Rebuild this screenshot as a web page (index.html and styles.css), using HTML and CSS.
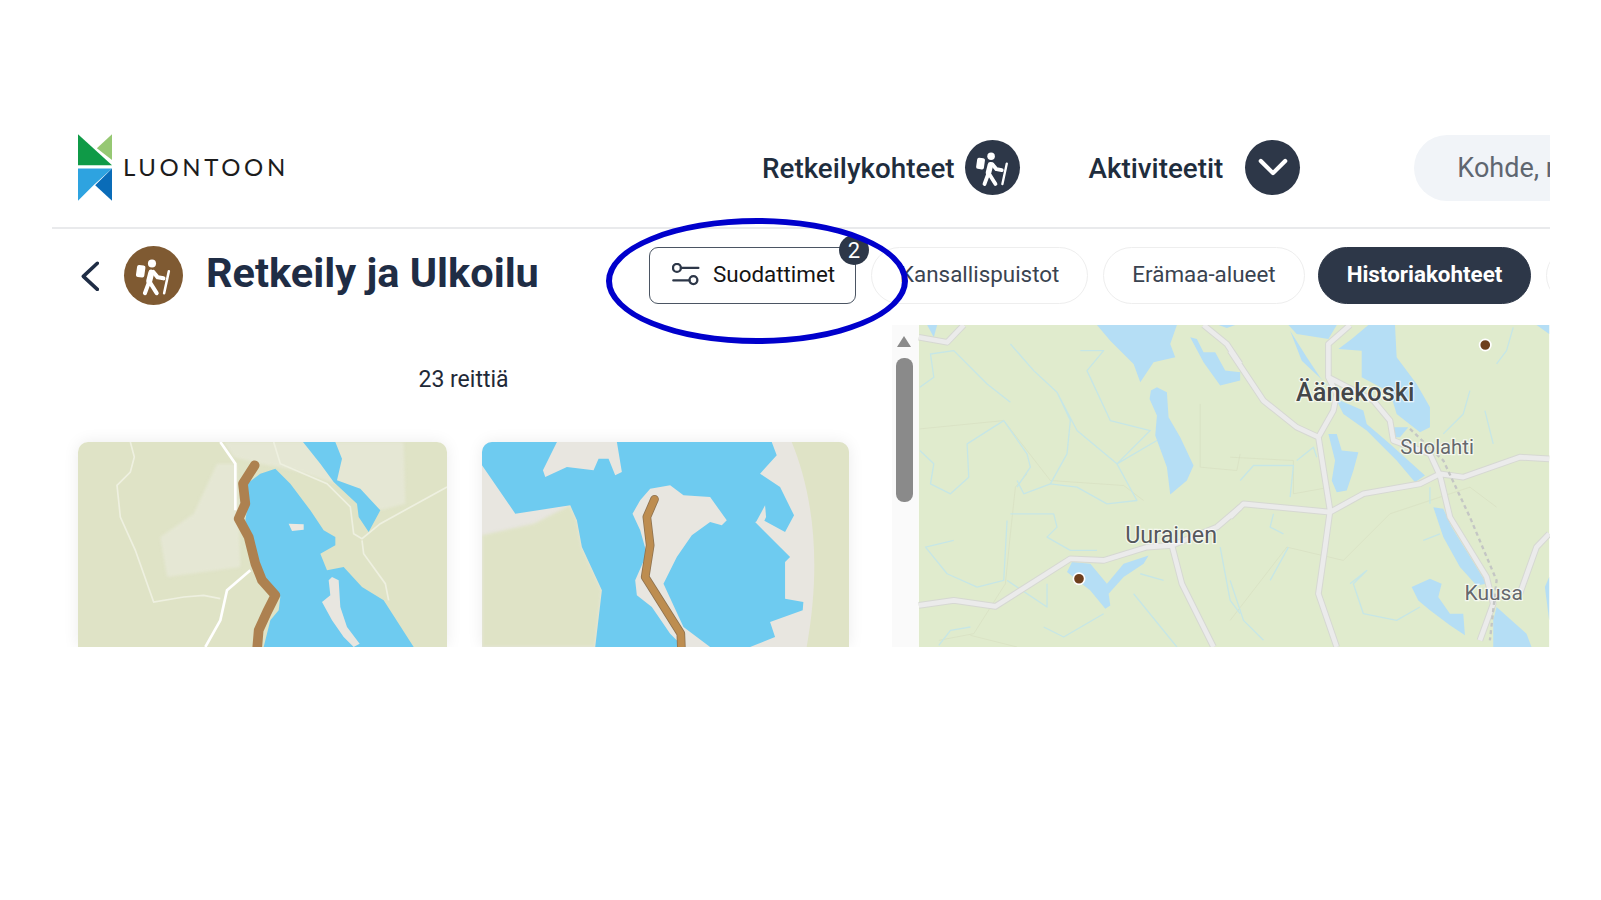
FILE: index.html
```html
<!DOCTYPE html>
<html lang="fi">
<head>
<meta charset="utf-8">
<title>Luontoon</title>
<link rel="stylesheet" href="styles.css">
</head>
<body>
<svg class="defs" width="0" height="0" aria-hidden="true">
  <symbol id="hiker" viewBox="15 15 175 175">
    <circle cx="98" cy="67" r="12" fill="#fff"/>
    <rect x="52" y="72" width="25" height="36" rx="6" fill="#fff" transform="rotate(8 65 90)"/>
    <path d="M96 94 90 118" fill="none" stroke="#fff" stroke-width="18" stroke-linecap="round"/>
    <path d="M90 120 77 155M90 120 112 155M102 92 115 108 132 111" fill="none" stroke="#fff" stroke-width="12" stroke-linecap="round" stroke-linejoin="round"/>
    <path d="M148 90 134 155" fill="none" stroke="#fff" stroke-width="7.5" stroke-linecap="round"/>
  </symbol>
</svg>
<div class="frame">
  <header class="top">
    <div class="brand">
      <svg class="logo" viewBox="24 28 101 198">
        <path d="M24 28 125 120H24Z" fill="#0f9a47"/>
        <path d="M125 28V105L80 70Z" fill="#96c873"/>
        <path d="M24 130H125L70 180 24 226Z" fill="#2ea3e0"/>
        <path d="M125 130V226L75 180Z" fill="#0a6cb8"/>
      </svg>
      <span class="wordmark">LUONTOON</span>
    </div>
    <nav class="nav">
      <span class="nav-label">Retkeilykohteet</span>
      <svg class="nav-icon"><use href="#hiker"/></svg>
      <span class="nav-label nav-second">Aktiviteetit</span>
      <span class="nav-circle">
        <svg class="chev-down" viewBox="0 0 32 20"><path d="M3 3 16 16 29 3"/></svg>
      </span>
    </nav>
    <div class="search">Kohde, reitti</div>
  </header>

  <section class="toolbar">
    <svg class="back" viewBox="90 450 55 92"><path d="M140 457 97 497 140 537"/></svg>
    <svg class="title-icon"><use href="#hiker"/></svg>
    <h1 class="title">Retkeily ja Ulkoilu</h1>
    <button class="filter">
      <svg class="filter-icon" viewBox="33 28 85 68">
        <circle cx="48" cy="42" r="12"/><path d="M60 42H113M37 80H86"/><circle cx="98" cy="79" r="12"/>
      </svg>
      Suodattimet
      <span class="badge">2</span>
    </button>
    <span class="chip">Kansallispuistot</span>
    <span class="chip">Erämaa-alueet</span>
    <span class="chip chip-active">Historiakohteet</span>
    <span class="chip chip-edge"></span>
  </section>

  <main class="main">
    <section class="list">
      <p class="count">23 reittiä</p>
      <div class="cards">
        <article class="card">
          <svg class="card-map" viewBox="53 65 1107 615" preserveAspectRatio="none">
            <rect x="53" y="65" width="1107" height="615" fill="#dfe3c6"/>
            <path class="patch" d="M490 65H1030L1035 250 960 270 860 200 700 150 600 130 520 110ZM300 350 400 280 470 130 530 130 540 440 320 470Z" fill="#e5e7d4"/>
            <path d="M210 65 222 110 210 155 170 195 180 290 225 390 280 545 370 530 430 525 480 535M640 65 660 130 800 190 870 260 880 340 905 355 960 310 1160 200M905 360 910 400 975 490 985 540" fill="none" stroke="#eef0e0" stroke-width="5"/>
            <path d="M480 65 525 130 525 270M570 450 500 510 480 600 435 680" fill="none" stroke="#fff" stroke-width="8"/>
            <path d="M728 65H825L845 115 830 180 900 205 960 270 925 335 895 290 890 250 820 185 780 130Z" fill="#6ecbf0"/>
            <path d="M560 190 600 160 645 145 690 190 750 270 790 330 825 350 825 375 780 400 800 450 850 440 905 500 970 540 1060 680H610L630 600 655 570 660 530 620 480 590 420 560 330 555 300 565 240Z" fill="#6ecbf0"/>
            <path d="M815 470 835 480 840 560 860 620 898 670 880 680 850 650 815 600 785 545 810 525 805 480Z" fill="#e8e6e0"/>
            <path d="M685 310 730 312 730 328 695 332Z" fill="#ece8e0"/>
            <path d="M583 135 548 190 555 250 535 295 565 350 585 430 605 480 645 525 620 575 595 630 590 690" fill="none" stroke="#ad8150" stroke-width="29" stroke-linecap="round" stroke-linejoin="round"/>
          </svg>
        </article>
        <article class="card">
          <svg class="card-map" viewBox="35 65 1102 615" preserveAspectRatio="none">
            <rect x="35" y="65" width="1102" height="615" fill="#e8e6e0"/>
            <path d="M965 65C1020 200 1060 400 1010 680H1137V65Z" fill="#dfe3c6"/>
            <path class="patch" d="M35 345 190 310 300 255 320 300 335 380 395 510 375 680H35Z" fill="#dfe3c6"/>
            <path d="M35 65H905L920 105 870 160 930 200 972 285 945 335 880 300 855 305 960 410 945 425 945 535 1000 545 998 570 900 605 915 650 840 680H375L395 510 335 380 320 300 300 255 135 280 35 135Z" fill="#6ecbf0"/>
            <path d="M260 65H440L455 155 435 165 415 115 385 115 370 150 290 140 225 170 218 150Z" fill="#e8e6e0"/>
            <path d="M885 255 888 290 875 318 858 305Z" fill="#e8e6e0"/>
            <path d="M540 205 600 195 640 225 720 230 770 300 755 315 720 305 665 345 620 410 580 490 640 620 720 680H640L600 640 545 560 500 525 495 480 530 400 510 330 487 280 510 240Z" fill="#e8e6e0"/>
            <path d="M553 237 530 290 540 375 525 470 632 640 634 690" fill="none" stroke="#8f7350" stroke-width="26" stroke-linecap="round" stroke-linejoin="round"/>
            <path d="M553 237 530 290 540 375 525 470 632 640 634 690" fill="none" stroke="#bd8d50" stroke-width="21" stroke-linecap="round" stroke-linejoin="round"/>
          </svg>
        </article>
      </div>
    </section>
    <div class="scroll">
      <span class="scroll-arrow"></span>
      <span class="scroll-thumb"></span>
    </div>
    <div class="map">
      <svg class="map-svg" viewBox="25 13 1893 967">
        <rect x="25" y="13" width="1893" height="967" fill="#e0ebcd"/>
        <g class="tracks">
          <path d="M28 325 280 300 420 480 640 495 700 540M350 460 315 500 300 640 285 790 190 940 85 960M870 250 870 440 980 450 990 400M180 945 320 980"/>
          <g transform="translate(960 0)">
            <path d="M0 410 190 420 190 520 300 500M340 720 480 580 720 500 800 560M0 900 170 680 340 720"/>
          </g>
        </g>
        <g class="streams">
          <path d="M28 200 70 170 60 100 130 90 230 190 300 245M300 70 370 150 440 215 480 300 470 400 420 490 340 520 320 480M510 90 580 90 530 150 600 300 720 330 620 430 680 540 590 550 500 500 420 490M28 390 70 430 60 490 120 520 175 470 170 370 280 300 350 400 360 440 320 500M300 580 430 580 440 620 410 650 480 690 560 690M290 600 280 780 200 800 110 760 45 680 130 660M410 790 410 860 290 780M180 920 120 930 85 975M400 920 460 950 580 880M670 820 800 980M690 760 760 780M930 680 960 840 990 880M440 215 500 330 620 430M740 360 620 430"/>
          <g transform="translate(960 0)">
            <path d="M30 480 70 435 190 435 180 530M200 420 250 380 260 410M130 580 120 620 160 640M0 780 40 900 100 960M175 680 120 780M360 790 410 750 370 790 400 880 500 900 570 860M580 660 630 640M720 210 700 280 640 340M765 270 790 370M850 20 830 90 800 130M600 500 600 550"/>
          </g>
        </g>
        <g class="water">
          <path d="M560 13H800L780 70 795 110 730 125 690 185 670 130 600 60Z"/>
          <path d="M840 50 860 55 880 95 915 95 945 150 990 155 990 180 930 195 880 125Z"/>
          <path d="M722 210 740 200 770 215 775 290 810 350 850 435 830 480 780 522 770 440 735 345 740 285 718 235Z"/>
          <path d="M50 13H80L70 50Z"/>
          <path d="M925 13H975L950 22Z"/>
          <path d="M485 725 540 730 590 790 640 730 715 705 700 730 640 770 595 820 600 855 585 865 540 810 470 755Z"/>
          <g transform="translate(960 0)">
            <path d="M175 13H320L295 55 200 40Z"/>
            <path d="M415 13H495L500 110 560 190 600 260 600 320 570 335 500 280 480 215 395 170 395 90 325 85 365 55Z"/>
            <path d="M180 30 230 110 270 170 330 240 400 270 410 310 480 370 585 465 555 485 500 420 410 330 340 280 300 200 215 120Z"/>
            <path d="M295 340 320 340 335 390 385 395 370 450 350 510 320 515 305 480 315 420Z"/>
            <path d="M0 160 30 155 20 180 0 185Z"/>
            <path d="M610 560 640 565 665 620 715 700 770 790 740 795 690 740 640 650Z"/>
            <path d="M545 800 600 775 635 790 625 830 660 880 700 880 705 945 660 915 600 870 565 840Z"/>
            <path d="M800 860 890 940 905 980H790V900Z"/>
            <path d="M958 770 945 800 958 900Z"/>
            <path d="M920 13H958V40Z"/>
            <path d="M490 320 535 320 510 350 495 350Z"/>
          </g>
        </g>
        <g class="roads-edge">
          <path d="M25 50 110 65 160 13M25 855 130 840 255 858 480 715 580 720 710 680 785 675 920 620 990 560M785 675 815 790 910 980M880 13 950 70 990 130"/>
          <g transform="translate(960 0)">
            <path d="M0 90 100 240 200 320 265 350 310 270 320 220 295 170 295 70 360 13M265 350 300 570 285 680 265 820 320 980M295 170 430 240 480 300 490 360 600 400 630 465 660 590 770 770 790 850 750 960M0 590 40 550 300 575 400 520 570 490 630 460 700 470 870 410 958 415M870 820 920 680 958 640"/>
          </g>
        </g>
        <g class="roads">
          <path d="M25 50 110 65 160 13M25 855 130 840 255 858 480 715 580 720 710 680 785 675 920 620 990 560M785 675 815 790 910 980M880 13 950 70 990 130"/>
          <g transform="translate(960 0)">
            <path d="M0 90 100 240 200 320 265 350 310 270 320 220 295 170 295 70 360 13M265 350 300 570 285 680 265 820 320 980M295 170 430 240 480 300 490 360 600 400 630 465 660 590 770 770 790 850 750 960M0 590 40 550 300 575 400 520 570 490 630 460 700 470 870 410 958 415M870 820 920 680 958 640"/>
          </g>
        </g>
        <path class="rail" d="M1500 325 1600 420 1680 590 1760 780 1740 960"/>
        <text class="place" x="645" y="667" font-size="70">Uurainen</text>
        <text class="place place-big" x="1158" y="240" font-size="76">Äänekoski</text>
        <text class="place place-small" x="1471" y="400" font-size="61">Suolahti</text>
        <text class="place place-small" x="1664" y="840" font-size="63">Kuusa</text>
        <circle class="pin" cx="506" cy="775" r="17"/>
        <circle class="pin" cx="1726" cy="73" r="17"/>
      </svg>
    </div>
  </main>
  <div class="ring"></div>
</div>
</body>
</html>
```
FILE: styles.css
```css
* { box-sizing: border-box; }
html, body { margin: 0; background: #fff; }
body { font-family: Roboto, "Liberation Sans", sans-serif; color: #1f2937; }
.defs { position: absolute; }

.frame {
  position: relative;
  margin-left: 52px;
  width: 1498px;
  height: 647px;
  overflow: hidden;
}

.top {
  display: flex;
  align-items: center;
  height: 229px;
  padding: 133px 0 26px 26px;
  border-bottom: 2px solid #e9eaec;
}
.brand { display: flex; align-items: center; flex: none; width: 207px; gap: 11px; }
.logo { width: 34px; height: 67px; flex: none; }
.wordmark {
  margin-bottom: 2px;
  font-family: Lato, "Liberation Sans", sans-serif;
  font-size: 24px;
  font-weight: 400;
  letter-spacing: 3.6px;
  color: #1c1c1c;
  white-space: nowrap;
}
.nav { display: flex; align-items: center; flex: none; margin-left: 477px; }
.nav-label { margin-top: 2px; font-size: 27.8px; font-weight: 500; color: #1f2d3d; white-space: nowrap; }
.nav-icon, .nav-circle {
  flex: none;
  width: 55px;
  height: 55px;
  margin-left: 10px;
  border-radius: 50%;
  background: #2d3748;
}
.nav-second { margin-left: 69px; }
.nav-circle { display: flex; align-items: center; justify-content: center; margin-left: 22px; }
.chev-down { width: 30px; height: 19px; }
.chev-down path { fill: none; stroke: #fff; stroke-width: 4.5; stroke-linecap: round; stroke-linejoin: round; }
.search {
  flex: none;
  width: 300px;
  height: 66px;
  margin: 2px 0 0 114px;
  padding-left: 43px;
  display: flex;
  align-items: center;
  border-radius: 33px;
  background: #f1f4f8;
  color: #5f6670;
  font-size: 27px;
  white-space: nowrap;
}

.toolbar {
  display: flex;
  align-items: center;
  height: 57px;
  margin-top: 18px;
  padding-left: 29px;
}
.back { width: 18px; height: 30px; flex: none; }
.back path { fill: none; stroke: #1f2d45; stroke-width: 11; stroke-linecap: round; stroke-linejoin: round; }
.title-icon {
  flex: none;
  width: 59px;
  height: 59px;
  margin-left: 25px;
  border-radius: 50%;
  background: #7f5a32;
}
.title {
  flex: none;
  margin: -7px 0 0 23px;
  width: 443px;
  font-size: 41.5px;
  font-weight: 700;
  color: #1f2d45;
  white-space: nowrap;
}
.filter {
  position: relative;
  flex: none;
  display: flex;
  align-items: center;
  gap: 13px;
  width: 207px;
  height: 57px;
  padding: 0 0 3px 22px;
  border: 1.5px solid #4b5563;
  border-radius: 9px;
  background: #fff;
  color: #141414;
  font-family: inherit;
  font-size: 22.4px;
  white-space: nowrap;
}
.filter-icon { width: 28px; height: 23px; flex: none; }
.filter-icon circle, .filter-icon path { fill: none; stroke: #2d3748; stroke-width: 7; stroke-linecap: round; }
.badge {
  position: absolute;
  top: -13px;
  right: -14px;
  width: 30px;
  height: 30px;
  display: flex;
  align-items: center;
  justify-content: center;
  border-radius: 50%;
  background: #2d3748;
  color: #fff;
  font-size: 22px;
}
.chip {
  flex: none;
  display: flex;
  align-items: center;
  height: 57px;
  margin-left: 15px;
  padding: 0 28px 3px;
  border: 1.5px solid #eeeeee;
  border-radius: 29px;
  background: #fff;
  color: #3a4350;
  font-size: 22.4px;
  white-space: nowrap;
}
.chip-active {
  margin-left: 13px;
  background: #2d3748;
  border-color: #2d3748;
  color: #fff;
  font-weight: 700;
}
.chip-edge { width: 120px; }

.main { display: flex; height: 322px; margin-top: 21px; }
.list { flex: none; width: 840px; padding-left: 26px; }
.count {
  width: 771px;
  margin: 40px 0 47px;
  text-align: center;
  font-size: 23px;
  line-height: 30px;
  color: #1f2937;
}
.cards { display: grid; grid-template-columns: 369px 367px; gap: 35px; }
.card {
  height: 205px;
  border-radius: 10px 10px 0 0;
  overflow: hidden;
  box-shadow: 0 0 16px rgba(0, 0, 0, .08);
}
.card-map { display: block; width: 100%; height: 100%; }
.patch { filter: blur(5px); }

.scroll {
  flex: none;
  width: 26px;
  padding: 11px 0 0 4px;
  background: #fafafa;
}
.scroll-arrow {
  display: block;
  width: 0;
  margin-left: 1px;
  border: 7px solid transparent;
  border-top: 0;
  border-bottom: 11px solid #8a8a8a;
}
.scroll-thumb {
  display: block;
  width: 17px;
  height: 144px;
  margin-top: 11px;
  border-radius: 8px;
  background: #8a8a8a;
}
.map { flex: none; width: 632px; }
.map-svg { display: block; width: 632px; height: 322px; }
.streams path { fill: none; stroke: #c6e6e6; stroke-width: 4; stroke-linejoin: round; }
.tracks path { fill: none; stroke: #d6dcc0; stroke-width: 2.5; opacity: .7; }
.water path { fill: #b5def5; }
.roads-edge path { fill: none; stroke: #d6d8d2; stroke-width: 20; stroke-linejoin: round; }
.roads path { fill: none; stroke: #ebebeb; stroke-width: 14; stroke-linejoin: round; }
.rail { fill: none; stroke: #c4c6c4; stroke-width: 7; stroke-dasharray: 12 10; }
.place {
  font-family: Roboto, "Liberation Sans", sans-serif;
  fill: #55585c;
  stroke: #fff;
  stroke-width: 7;
  stroke-opacity: .7;
  paint-order: stroke;
}
.place-big { font-weight: 500; fill: #434649; }
.place-small { fill: #66696d; }
.pin { fill: #6e3f1d; stroke: #fff; stroke-width: 5; }

.ring {
  position: absolute;
  left: 554px;
  top: 218px;
  width: 302px;
  height: 126px;
  border: 6px solid #0000cc;
  border-radius: 50%;
}
```
